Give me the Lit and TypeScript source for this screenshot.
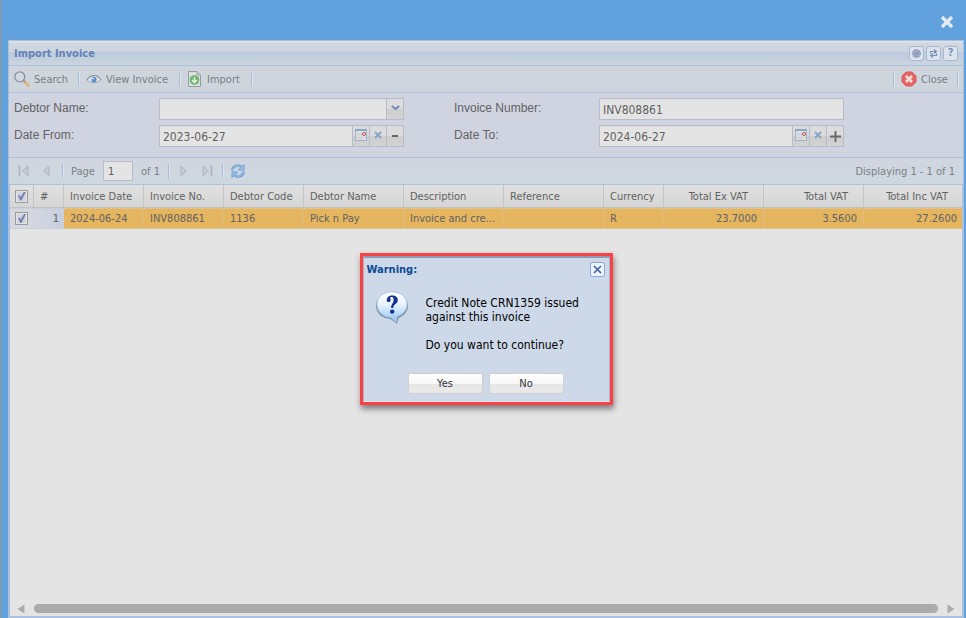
import { LitElement, html, svg, css } from "lit";
import { customElement } from "lit/decorators.js";
import { classMap } from "lit/directives/class-map.js";

interface Column {
  title: string;
  value: string;
  size: string;
  numeric?: boolean;
}

const columns: Column[] = [
  { title: "Invoice Date", value: "2024-06-24", size: "w80" },
  { title: "Invoice No.", value: "INV808861", size: "w80" },
  { title: "Debtor Code", value: "1136", size: "w80" },
  { title: "Debtor Name", value: "Pick n Pay", size: "w100" },
  { title: "Description", value: "Invoice and cre...", size: "w100" },
  { title: "Reference", value: "", size: "w100" },
  { title: "Currency", value: "R", size: "w60" },
  { title: "Total Ex VAT", value: "23.7000", size: "w100", numeric: true },
  { title: "Total VAT", value: "3.5600", size: "w100", numeric: true },
  { title: "Total Inc VAT", value: "27.2600", size: "wrest", numeric: true },
];

const icon = (w: number, h: number, body: unknown) =>
  html`<svg width=${w} height=${h} viewBox="0 0 ${w} ${h}" aria-hidden="true">${body}</svg>`;

const icons = {
  modalClose: icon(14, 14, svg`<path d="M3.2 3.2L10.8 10.8M10.8 3.2L3.2 10.8" stroke="#e4eaf1" stroke-width="3.4" stroke-linecap="square"/>`),
  search: icon(16, 16, svg`<path d="M11 11L14.5 14.5" stroke="#dcb583" stroke-width="3" stroke-linecap="round"/><path d="M9 9L11 11" stroke="#8a8a90" stroke-width="1.6"/><circle cx="5.8" cy="5.8" r="5" fill="#d3d9e2" stroke="#8b8ea0" stroke-width="1.3"/>`),
  eye: icon(16, 16, svg`<path d="M.8 9C3 5.6 5.4 4.6 8 4.6S13 5.6 15.2 9C13 11.4 10.6 12 8 12S3 11.4 .8 9Z" fill="#e0e4e9"/><path d="M.8 9C3 5.6 5.400 4.600 8 4.600S13 5.600 15.200 9" fill="none" stroke="#8b9098" stroke-width="1.300"/><path d="M1 9C4 12.400 12 12.400 15 9" fill="none" stroke="#a0a6ae"/><circle cx="8" cy="8.600" r="2.600" fill="#5690cf"/><circle cx="7" cy="7.600" r=".9" fill="#dfe8f2"/>`),
  import: icon(16, 16, svg`<path d="M1.500 .5H10L13.500 4V15.500H1.500Z" fill="#dcdfe1" stroke="#999da2"/><path d="M10 .5V4H13.500" fill="none" stroke="#999da2"/><circle cx="7.500" cy="9" r="4.800" fill="#6cb56c"/><path d="M7.500 6V11.400M5 9L7.500 11.600L10 9" fill="none" stroke="#e6eee6" stroke-width="1.600"/>`),
  close: icon(16, 16, svg`<path d="M5 1H11L15 5V11L11 15H5L1 11V5Z" fill="#e56464" stroke="#dc5a5a"/><path d="M5 5L11 11M11 5L5 11" stroke="#eadfe0" stroke-width="2.600"/>`),
  gear: icon(9, 9, svg`<circle cx="4.500" cy="4.500" r="3.700" fill="#a9b3cb" stroke="#8593b4" stroke-width="1.400" stroke-dasharray="1.700 .7"/><circle cx="4.500" cy="4.500" r="2.600" fill="#9ba8c5"/><circle cx="4.500" cy="4.500" r="1" fill="#8290b2"/>`),
  swap: icon(9, 9, svg`<path d="M1.500 4.500V2.500H6.500M5 .5L7.500 2.500L5 4.500M7.500 4.500V6.500H2.500M4 4.500L1.500 6.500L4 8.500" fill="none" stroke="#7791b8" stroke-width="1.200"/>`),
  dropdown: icon(9, 6, svg`<path d="M.8 1L4.500 4L8.200 1" fill="none" stroke="#7188b4" stroke-width="2"/>`),
  calendar: icon(12, 12, svg`<rect x=".5" y=".5" width="11" height="11" fill="#dde0e2" stroke="#9fb2c9"/><path d="M0 1H12" stroke="#8ba8c8" stroke-width="2"/><path d="M3.500 3V11M6.500 3V11M1 5.500H8M1 8.500H11" stroke="#cdd1d6"/><circle cx="9" cy="5" r="1.500" fill="#e8e2e2" stroke="#bf5757"/>`),
  clear: icon(8, 8, svg`<path d="M1 1L7 7M7 1L1 7" stroke="#85a5c8" stroke-width="1.900"/>`),
  minus: icon(6, 2, svg`<path d="M0 1H6" stroke="#666" stroke-width="2"/>`),
  plus: icon(11, 11, svg`<path d="M0 5.500H11M5.500 0V11" stroke="#666" stroke-width="1.800"/>`),
  first: icon(11, 12, svg`<path d="M1.500 .5V11.500" stroke="#b3b8c0" stroke-width="2"/><path d="M10 1V11L4.500 6Z" fill="#c6cad1" stroke="#b0b5be"/>`),
  prev: icon(7, 12, svg`<path d="M6 1V11L.8 6Z" fill="#c6cad1" stroke="#b0b5be"/>`),
  next: icon(7, 12, svg`<path d="M1 1V11L6.200 6Z" fill="#c6cad1" stroke="#b0b5be"/>`),
  last: icon(11, 12, svg`<path d="M9.500 .5V11.500" stroke="#b3b8c0" stroke-width="2"/><path d="M1 1V11L6.500 6Z" fill="#c6cad1" stroke="#b0b5be"/>`),
  refresh: icon(16, 16, svg`<path d="M2.200 7.500A5.600 5.600 0 0 1 11.500 4" fill="none" stroke="#6c9fd2" stroke-width="2.600"/><path d="M2.400 7A5.600 5.600 0 0 1 11 3.800" fill="none" stroke="#a9cbe8" stroke-width="1"/><path d="M14 1.500V7H8.500Z" fill="#a0c6e8" stroke="#6c9fd2"/><path d="M13.800 8.500A5.600 5.600 0 0 1 4.500 12" fill="none" stroke="#6c9fd2" stroke-width="2.600"/><path d="M13.600 9A5.600 5.600 0 0 1 5 12.200" fill="none" stroke="#a9cbe8" stroke-width="1"/><path d="M2 14.500V9H7.500Z" fill="#a0c6e8" stroke="#6c9fd2"/>`),
  left: icon(8, 10, svg`<path d="M7.500 .5V9.500L.5 5Z" fill="#ababab"/>`),
  right: icon(8, 10, svg`<path d="M.5 .5V9.500L7.500 5Z" fill="#ababab"/>`),
  dialogClose: icon(15, 15, svg`<rect x=".5" y=".5" width="14" height="14" rx="2" fill="#edf3fc" stroke="#85a6d5"/><path d="M4 4L11 11M11 4L4 11" stroke="#3a5a9e" stroke-width="1.500"/>`),
};

const question = html`<svg class="question" width="32" height="34" viewBox="0 0 32 34" role="img" aria-label="Question">
  <defs>
    <linearGradient id="bubble" x1="0" y1="0" x2="0" y2="1">
      <stop offset="0" stop-color="#ffffff" />
      <stop offset=".4" stop-color="#e8f3fe" />
      <stop offset="1" stop-color="#8fc3f6" />
    </linearGradient>
  </defs>
  <path d="M16 2C25 2 32 7 32 14.500C32 20.500 28 25 22.500 27L21 33L14.500 28C6 27.500 0 22 0 14.500C0 7 7 2 16 2Z" fill="#6f7d92" opacity=".8" />
  <path d="M16 .8C24.500 .8 31 6 31 13C31 19 27 23.500 21 25.500L20 31.500L15 26.200C7 26.200 1 20.500 1 13C1 6 7.500 .8 16 .8Z" fill="url(#bubble)" stroke="#a9c6e6" />
  <path d="M10.800 9.500C10.800 6.200 13 4.500 16.200 4.500C19.800 4.500 21.800 6.500 21.800 9C21.800 13 17.300 13 17.200 17H15.200C14.800 13 17.600 12.500 17.600 9C17.600 7 17 5.900 15.500 5.900C14.500 5.900 13.900 6.500 14.300 7.500C15.200 9 14.600 11 12.900 11C11.600 11 10.800 10.500 10.800 9.500Z" fill="#12308e" />
  <circle cx="16.200" cy="20.600" r="2.200" fill="#12308e" />
</svg>`;

@customElement("app-root")
export class AppRoot extends LitElement {
  static styles = css`
    :host {
      display: block;
      font: 11px/14px "DejaVu Sans Condensed", "Noto Sans", sans-serif;
      color: #626262;
    }
    * { box-sizing: border-box; }
    svg { display: block; flex: none; }
    button {
      font: inherit;
      color: inherit;
      border: 0;
      margin: 0;
      padding: 0;
      background: none;
      display: inline-flex;
      align-items: center;
      justify-content: center;
    }
    input { font: inherit; color: inherit; margin: 0; border-radius: 0; min-width: 0; }
    .modal {
      min-height: 100vh;
      display: flex;
      flex-direction: column;
      background: #60a1de;
      border-left: 1px solid #98948f;
      padding: 0 2px 0 7px;
    }
    .topbar {
      height: 40px;
      flex: none;
      display: flex;
      justify-content: flex-end;
      align-items: center;
      padding: 4px 10px 0 0;
    }
    .panel {
      flex: 1;
      position: relative;
      display: flex;
      flex-direction: column;
      border: 1px solid #abc0dc;
      background: #e4e4e4;
    }
    .title {
      height: 25px;
      display: flex;
      align-items: center;
      justify-content: space-between;
      padding: 0 5px;
      background: linear-gradient(#dfe3e8 0 1px, #d2d8e0 2px, #ccd5df 11px, #bccbdf 11px, #c3cfde 18px, #ccd6df);
      border-bottom: 1px solid #abc0dc;
    }
    h1 { margin: 0; padding-top: 1px; font-size: 11px; line-height: 14px; font-weight: bold; color: #6682b4; }
    .tools { display: flex; gap: 2px; }
    .tool {
      width: 15px;
      height: 15px;
      border: 1px solid #a8bad3;
      border-radius: 3px;
      background: #dce3ec;
      font-weight: bold;
      color: #7490b9;
    }
    .bar {
      height: 27px;
      display: flex;
      align-items: center;
      border-bottom: 1px solid #abc0dc;
      background: linear-gradient(#d1d5e1, #ced8df);
      color: #7c7f84;
    }
    .actions { padding: 0 4px 0 5px; background: #cfd5dd; }
    .action { gap: 4px; height: 22px; justify-content: flex-start; }
    .action span, .bar > label, .bar > .text { padding-top: 2px; }
    .a-search { width: 64px; }
    .a-view { width: 93px; }
    .a-import { width: 64px; }
    .a-close { width: 56px; }
    .sep { width: 2px; height: 14px; flex: none; border-left: 1px solid #a6bedd; border-right: 1px solid #dfe4ea; }
    .sep.pre { margin-right: 6px; }
    .push { flex: 1; }
    .form {
      display: grid;
      grid-template-columns: 145px 245px 195px 245px;
      row-gap: 5px;
      padding: 5px;
      height: 64px;
      background: #d0d4e1;
      font: 12px/20px "Liberation Sans", sans-serif;
      align-content: start;
      color: #626262;
    }
    .form .second { margin-left: 50px; }
    .field { display: flex; height: 22px; font: 12px/20px "DejaVu Sans Condensed", "Noto Sans", sans-serif; }
    .field input {
      flex: 1;
      width: 0;
      height: 22px;
      padding: 1px 3px 0;
      border: 1px solid #b8bcca;
      background: linear-gradient(#dedede, #e4e4e4 3px);
      outline: 0;
    }
    .trigger {
      width: 17px;
      height: 22px;
      padding-bottom: 2px;
      border: 1px solid #b8bcca;
      border-left: 0;
      background: linear-gradient(#dcdcdc 50%, #cdcdcd 50%, #d3d3d3);
    }
    .sign { padding-bottom: 0; }
    .paging { border-top: 1px solid #abc0dc; height: 28px; padding: 0 8px 0 9px; }
    .paging input {
      width: 30px;
      height: 20px;
      padding: 1px 4px 0;
      border: 1px solid #b8bcca;
      background: #e4e4e4;
      color: #626262;
      margin: 0 8px 0 7px;
    }
    .p-first { width: 11px; margin-right: 14px; }
    .p-prev { width: 7px; margin-right: 12px; }
    .p-page { width: 25px; margin-left: 7px; }
    .p-of { width: 27px; }
    .p-next { width: 7px; margin: 0 15px 0 10px; }
    .p-last { width: 11px; margin-right: 9px; }
    .p-refresh { width: 16px; margin-left: 6px; }
    .grid {
      flex: 1;
      display: flex;
      flex-direction: column;
      border: 1px solid #abc0dc;
      border-top: 0;
      overflow: hidden;
    }
    table { border-collapse: separate; border-spacing: 0; table-layout: fixed; width: calc(100% + 2px); }
    th, td {
      padding: 0 6px;
      text-align: left;
      font-weight: normal;
      white-space: nowrap;
    }
    th {
      height: 23px;
      padding-top: 1px;
      border-right: 1px solid #c3c3c3;
      border-bottom: 1px solid #c3c3c3;
      background: linear-gradient(#e0e0e0, #d6d6d6);
    }
    td {
      height: 21px;
      border-right: 1px dotted #d3c4a4;
      border-top: 1px dotted #d6cdbb;
      border-bottom: 1px dotted #d6cdbb;
      background: #e5b560;
    }
    .w80 { width: 80px; }
    .w100 { width: 100px; }
    .w60 { width: 60px; }
    .num { text-align: right; }
    th.num { padding-right: 15px; }
    .check { width: 24px; padding: 0 0 0 5px; }
    .rownum { width: 30px; }
    td.check { background: #d5d8e0; border-color: #c3c9d4; }
    td.rownum { text-align: right; padding-right: 4px; background: linear-gradient(90deg, #d3d7e1, #c7cfde); border-color: #c3c9d4; }
    .check input {
      appearance: none;
      display: block;
      width: 13px;
      height: 13px;
      padding: 1px;
      border: 1px solid #9b9b9b;
      background: #d3d6de;
      box-shadow: inset 0 0 0 1px #e4e4e6;
    }
    .check input:checked::before {
      content: "";
      display: block;
      width: 9px;
      height: 9px;
      background: #7685b0;
      clip-path: polygon(12% 45%, 30% 40%, 42% 62%, 78% 0, 100% 0, 50% 100%, 34% 100%);
    }
    .fill { flex: 1; }
    .scroll { display: flex; align-items: center; gap: 9px; height: 15px; padding: 0 7px; }
    .thumb { flex: 1; height: 9px; border-radius: 5px; background: #ababab; }
    .overlay {
      position: absolute;
      inset: 0;
      display: grid;
      place-items: center;
    }
    dialog {
      position: static;
      margin: 0;
      width: 253px;
      padding: 0;
      border: 3px solid #fb4144;
      background: #cdd9e8;
      box-shadow: 1px 4px 6px rgba(0, 0, 0, 0.45);
      color: #000;
      font: 12px/14px "DejaVu Sans Condensed", "Noto Sans", sans-serif;
    }
    .inner { border: 1px solid #a4b3c8; border-top: 2px solid #8c9bb1; border-bottom-color: #e6edf5; padding: 4px 4px 5px 3px; }
    .dhead { display: flex; justify-content: space-between; align-items: center; height: 15px; }
    h2 { margin: 0; padding-top: 1px; font-size: 11px; line-height: 14px; color: #0b4b95; }
    .message { display: flex; gap: 18px; padding: 14px 0 0 9px; }
    .message p { margin: 5px 0 14px; }
    .message p + p { margin: 0; }
    .buttons { display: flex; justify-content: center; gap: 6px; padding: 21px 0 2px; }
    .buttons button {
      width: 75px;
      height: 21px;
      padding-top: 1px;
      border: 1px solid #d0d0d0;
      border-radius: 2px;
      background: linear-gradient(#fefefe, #f6f6f6 50%, #e6e6e6 50%, #e9e9e9);
      font-size: 11px;
      color: #333;
    }
  `;

  private dateField(id: string, value: string, sign: unknown, label: string) {
    return html`<div class="field">
      <input id=${id} .value=${value} />
      <button class="trigger" aria-label="Pick date">${icons.calendar}</button>
      <button class="trigger" aria-label="Clear date">${icons.clear}</button>
      <button class="trigger sign" aria-label=${label}>${sign}</button>
    </div>`;
  }

  render() {
    return html`
      <div class="modal">
        <div class="topbar"><button aria-label="Close window">${icons.modalClose}</button></div>
        <main class="panel">
          <header class="title">
            <h1>Import Invoice</h1>
            <div class="tools">
              <button class="tool" aria-label="Settings">${icons.gear}</button>
              <button class="tool" aria-label="Reload">${icons.swap}</button>
              <button class="tool">?</button>
            </div>
          </header>
          <div class="bar actions">
            <button class="action a-search">${icons.search}<span>Search</span></button>
            <span class="sep pre"></span>
            <button class="action a-view">${icons.eye}<span>View Invoice</span></button>
            <span class="sep pre"></span>
            <button class="action a-import">${icons.import}<span>Import</span></button>
            <span class="sep"></span>
            <span class="push"></span>
            <span class="sep pre"></span>
            <button class="action a-close">${icons.close}<span>Close</span></button>
            <span class="sep"></span>
          </div>
          <div class="form">
            <label for="debtor">Debtor Name:</label>
            <div class="field">
              <input id="debtor" />
              <button class="trigger" aria-label="Show debtors">${icons.dropdown}</button>
            </div>
            <label class="second" for="number">Invoice Number:</label>
            <div class="field"><input id="number" .value=${"INV808861"} /></div>
            <label for="from">Date From:</label>
            ${this.dateField("from", "2023-06-27", icons.minus, "Earlier")}
            <label class="second" for="to">Date To:</label>
            ${this.dateField("to", "2024-06-27", icons.plus, "Later")}
          </div>
          <div class="bar paging">
            <button class="p-first" aria-label="First page">${icons.first}</button>
            <button class="p-prev" aria-label="Previous page">${icons.prev}</button>
            <span class="sep"></span>
            <label class="p-page" for="page">Page</label>
            <input id="page" .value=${"1"} />
            <span class="text p-of">of 1</span>
            <span class="sep"></span>
            <button class="p-next" aria-label="Next page">${icons.next}</button>
            <button class="p-last" aria-label="Last page">${icons.last}</button>
            <span class="sep"></span>
            <button class="p-refresh" aria-label="Refresh">${icons.refresh}</button>
            <span class="push"></span>
            <span class="text">Displaying 1 - 1 of 1</span>
          </div>
          <section class="grid">
            <table>
              <thead>
                <tr>
                  <th class="check"><input type="checkbox" aria-label="Select all" checked /></th>
                  <th class="rownum">#</th>
                  ${columns.map((c) => html`<th class=${classMap({ [c.size]: true, num: !!c.numeric })}>${c.title}</th>`)}
                </tr>
              </thead>
              <tbody>
                <tr>
                  <td class="check"><input type="checkbox" aria-label="Select row 1" checked /></td>
                  <td class="rownum">1</td>
                  ${columns.map((c) => html`<td class=${classMap({ num: !!c.numeric })}>${c.value}</td>`)}
                </tr>
              </tbody>
            </table>
            <div class="fill"></div>
            <div class="scroll">${icons.left}<div class="thumb"></div>${icons.right}</div>
          </section>
          <div class="overlay">
            <dialog open aria-labelledby="warn">
              <div class="inner">
                <div class="dhead">
                  <h2 id="warn">Warning:</h2>
                  <button aria-label="Close">${icons.dialogClose}</button>
                </div>
                <div class="message">
                  ${question}
                  <div>
                    <p>Credit Note CRN1359 issued<br />against this invoice</p>
                    <p>Do you want to continue?</p>
                  </div>
                </div>
                <div class="buttons"><button>Yes</button><button>No</button></div>
              </div>
            </dialog>
          </div>
        </main>
      </div>
    `;
  }
}
